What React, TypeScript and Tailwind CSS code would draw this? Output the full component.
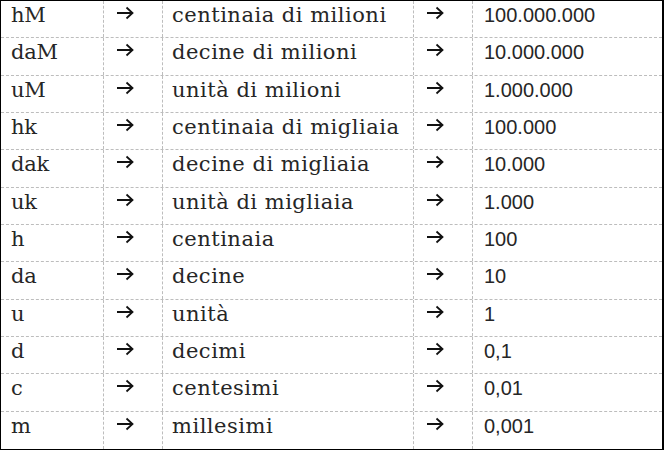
const rows: [string, string, string][] = [
  ["hM", "centinaia di milioni", "100.000.000"],
  ["daM", "decine di milioni", "10.000.000"],
  ["uM", "unità di milioni", "1.000.000"],
  ["hk", "centinaia di migliaia", "100.000"],
  ["dak", "decine di migliaia", "10.000"],
  ["uk", "unità di migliaia", "1.000"],
  ["h", "centinaia", "100"],
  ["da", "decine", "10"],
  ["u", "unità", "1"],
  ["d", "decimi", "0,1"],
  ["c", "centesimi", "0,01"],
  ["m", "millesimi", "0,001"],
];

function Arrow() {
  return (
    <svg width="18" height="14" viewBox="0 0 18 14" className="block">
      <path d="M1 7H16.5M10.5 1.5L16.5 7L10.5 12.5" fill="none" stroke="#111" strokeWidth="1.8" />
    </svg>
  );
}

export default function App() {
  return (
    <div className="w-[664px] h-[450px] bg-white overflow-hidden">
      <div className="w-[664px] border-t border-l border-b border-r-2 border-black text-[#262626]">
        {rows.map(([sym, name, val], i) => (
          <div
            key={sym}
            className={`grid grid-cols-[103px_59px_251px_59px_1fr] h-[37.33px] ${
              i < rows.length - 1 ? "border-b border-dashed border-[#bdbdbd]" : ""
            }`}
          >
            <div className="pl-[10px] pt-0 text-[21px] leading-[28px] tracking-[-0.2px] font-['DejaVu_Serif',serif] border-r border-dashed border-[#bdbdbd]">
              {sym}
            </div>
            <div className="pl-[12px] pt-[5px] border-r border-dashed border-[#bdbdbd]">
              <Arrow />
            </div>
            <div className="pl-[9px] pt-0 text-[21px] leading-[28px] tracking-[0.5px] font-['DejaVu_Serif',serif] border-r border-dashed border-[#bdbdbd]">
              {name}
            </div>
            <div className="pl-[12px] pt-[5px] border-r border-dashed border-[#bdbdbd]">
              <Arrow />
            </div>
            <div className="pl-[11px] pt-[1px] text-[20px] leading-[26px] font-['Liberation_Sans',sans-serif]">
              {val}
            </div>
          </div>
        ))}
      </div>
    </div>
  );
}
